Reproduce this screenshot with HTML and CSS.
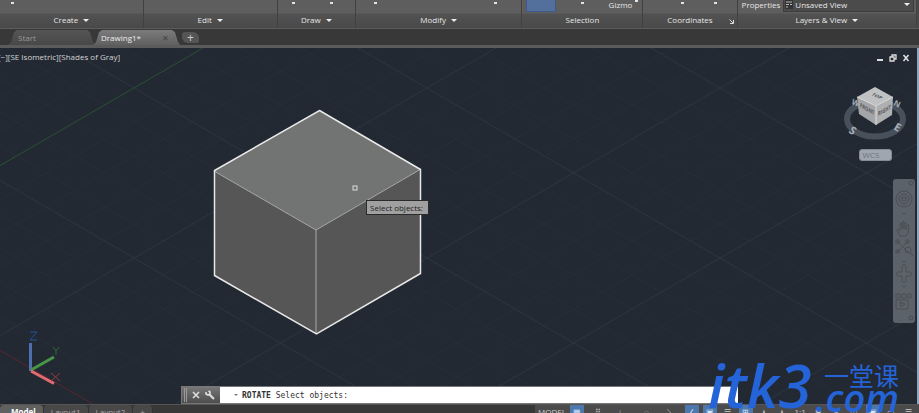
FILE: index.html
```
<!DOCTYPE html>
<html lang="en">

<head>
    <meta charset="utf-8">
    <title>Drawing1</title>
    <link rel="stylesheet" href="styles.css">
</head>

<body>
    <div class="app">
        <div class="ribbon">
            <div class="panel panel-create">
                <div class="panel-tools"><i class="dot"></i></div>
                <button class="panel-title">Create <i class="arrow"></i></button>
            </div>
            <div class="panel panel-edit">
                <div class="panel-tools"></div>
                <button class="panel-title">Edit <i class="arrow"></i></button>
            </div>
            <div class="panel panel-draw">
                <div class="panel-tools spread"><i class="dot"></i><i class="dot"></i></div>
                <button class="panel-title">Draw <i class="arrow"></i></button>
            </div>
            <div class="panel panel-modify">
                <div class="panel-tools spread"><i class="dot"></i><i class="dot"></i></div>
                <button class="panel-title">Modify <i class="arrow"></i></button>
            </div>
            <div class="panel panel-selection">
                <div class="panel-tools">
                    <button class="tool-active" aria-label="Culling"></button>
                    <i class="dot"></i>
                    <span class="gizmo">Gizmo <i class="dot"></i></span>
                </div>
                <div class="panel-title">Selection</div>
            </div>
            <div class="panel panel-coordinates">
                <div class="panel-tools spread"><i class="dot"></i><i class="dot"></i></div>
                <div class="panel-title">Coordinates
                    <svg class="launcher" width="5" height="5" viewBox="0 0 5 5"><path d="M0.5 0.5L4 4M4.5 1v3.5H1" /></svg>
                </div>
            </div>
            <div class="panel panel-layers">
                <div class="panel-tools">
                    <label for="view">Properties</label>
                    <div class="view-box">
                        <svg width="8" height="9" viewBox="0 0 8 9"><path class="view-icon-back" d="M0 0h8v9H0z" /><path class="view-icon" d="M1 2h6M1 4.500h3M5 4.500h2M1 7h2" /></svg>
                        <select id="view">
                            <option>Unsaved View</option>
                        </select>
                        <i class="arrow"></i>
                    </div>
                </div>
                <button class="panel-title">Layers &amp; View <i class="arrow"></i></button>
            </div>
        </div>

        <div class="file-tabs">
            <button class="file-tab">Start</button>
            <button class="file-tab active">Drawing1* <span class="tab-close">✕</span></button>
            <button class="file-tab-new" aria-label="New drawing">+</button>
        </div>

        <div class="viewport">
            <svg class="scene">
                <defs>
                    <pattern id="grid" x="134" y="40" width="293" height="170" patternUnits="userSpaceOnUse">
                        <path class="grid-minor" d="M0 34L58.600 0M0 68L117.200 0M0 102L175.800 0M0 136L234.400 0M58.600 170L293 34M117.200 170L293 68M175.800 170L293 102M234.400 170L293 136M0 34L234.400 170M0 68L175.800 170M0 102L117.200 170M0 136L58.600 170M58.600 0L293 136M117.200 0L293 102M175.800 0L293 68M234.400 0L293 34" />
                        <path class="grid-major" d="M0 0L293 170M0 170L293 0" />
                    </pattern>
                </defs>
                <rect width="100%" height="100%" fill="url(#grid)" />
                <path class="axis-y" d="M0 117.500L203 0" />
                <path class="axis-x" d="M0 302.500L93 356" />
                <path class="cube-top" d="M319 62L421 121L316 182L214 123z" />
                <path class="cube-side" d="M214 123L316 182V286L214 228zM421 121L316 182V286L421 225z" />
                <path class="cube-inner" d="M214 123L316 182L421 121M316 182V286" />
                <path class="cube-edge" d="M319.500 62.500L420.500 121.500V225.500L316.500 286L214.500 227.500V122.500z" />
                <rect class="pickbox" x="353" y="138" width="4" height="4" />
                <g class="ucs">
                    <path class="ucs-z" d="M30.500 323V295" />
                    <path class="ucs-y" d="M31 322L54 309" />
                    <path class="ucs-x" d="M31 323L54 335.500" />
                    <path class="ucs-z thin" d="M30 284h7l-7 8h7" />
                    <path class="ucs-y thin" d="M53 299l3 4l3-4M56 303v4" />
                    <path class="ucs-x thin" d="M51 325l9 8M60 325l-9 8" />
                </g>
            </svg>

            <div class="view-label">[−][SE Isometric][Shades of Gray]</div>
            <div class="window-buttons">
                <button aria-label="Minimize"><svg width="8" height="8" viewBox="0 0 8 8"><path d="M1 6h6" stroke-width="2" /></svg></button>
                <button aria-label="Restore"><svg width="8" height="8" viewBox="0 0 8 8"><path d="M1 3h4v4H1zM3 2.500V1h4v4H5.500" /></svg></button>
                <button aria-label="Close"><svg width="8" height="8" viewBox="0 0 8 8"><path d="M1.500 1l5 6M6.500 1l-5 6" stroke-width="1.600" /></svg></button>
            </div>

            <div class="view-cube">
                <svg width="66" height="58" viewBox="0 0 66 58">
                    <ellipse class="compass" cx="33" cy="34" rx="28" ry="17.500" />
                    <text class="vc-point" transform="translate(6 47) rotate(35)">S</text>
                    <text class="vc-point" transform="translate(51 44) rotate(30)">E</text>
                    <text class="vc-point small" transform="translate(9 19) rotate(20)">W</text>
                    <text class="vc-point small" transform="translate(51 20) rotate(25)">N</text>
                    <path class="vc-top" d="M33 2L51 12L34 21L15 12z" />
                    <path class="vc-left" d="M15 12L34 21V40L17 29z" />
                    <path class="vc-right" d="M34 21L51 12L50 30L34 40z" />
                    <path class="vc-edge" d="M15 12L34 21L51 12M34 21V40" />
                    <text class="vc-text" transform="matrix(.8 .35 -.6 .5 29 10)">TOP</text>
                    <text class="vc-text" transform="matrix(.7 .4 0 1 18 22)">FRONT</text>
                    <text class="vc-text" transform="matrix(.7 -.4 0 1 36 31)">RIGHT</text>
                </svg>
                <button class="wcs">WCS</button>
            </div>

            <div class="nav-bar">
                <svg width="22" height="144" viewBox="0 0 22 144">
                    <circle cx="18" cy="4" r="2" />
                    <circle cx="11" cy="20" r="8" />
                    <circle cx="11" cy="20" r="5" />
                    <path d="M9 18h4v4H9zM9 34l2 1l2-1" />
                    <path d="M7 57L4 51q1-2 3 1V45q1-2 2 0v5V43q1-2 2 0v7V44q1-2 2 0v7l1-5q2-1 2 1l-1 7l-2 3z" />
                    <path d="M4 62l11 11M15 62L4 73M3 61h3v3H3zM13 61h3v3h-3zM3 71h3v3H3z" />
                    <circle cx="15" cy="71" r="3" />
                    <path d="M17 73l3 4M9 82l2 1l2-1" />
                    <path d="M9 87l2-2l2 2v6h4l2 2l-2 2h-4v5l-2 2l-2-2v-5H5l-2-2l2-2h4z" />
                    <path d="M9 107l2 1l2-1M3 115h4v4H3zM9 115h4v4H9zM15 115h3v4h-3zM3 121h12v9H3z" />
                    <path d="M7 123l5 2l-4 3z" />
                    <circle cx="18" cy="139" r="2" />
                </svg>
            </div>

            <div class="tooltip">Select objects:</div>

            <div class="command-line">
                <div class="command-grip"></div>
                <button aria-label="Close"><svg width="8" height="8" viewBox="0 0 8 8"><path d="M1 1l6 6M7 1L1 7" stroke-width="1.600" /></svg></button>
                <button aria-label="Customize"><svg width="10" height="10" viewBox="0 0 10 10"><path d="M4.500 4.500L9 9" stroke-width="2.200" /><path d="M1 2v2l2 1l2-1V2L3.500 1" stroke-width="1.600" /></svg></button>
                <div class="command-box">
                    <i class="arrow small"></i>
                    <label for="command"><b>ROTATE</b> Select objects:</label>
                    <input id="command" type="text">
                </div>
            </div>
        </div>

        <div class="status-bar">
            <div class="layout-tabs">
                <button class="layout-tab active">Model</button>
                <button class="layout-tab">Layout1</button>
                <button class="layout-tab">Layout2</button>
                <button class="layout-tab">+</button>
            </div>
            <div class="status-tools">
                <button class="status-model">MODEL</button>
                <button class="on">▦</button>
                <button class="wide">⠿</button>
                <button class="wide">∟</button>
                <button class="wide">◌</button>
                <button class="wide">⟍</button>
                <button class="on">∠</button>
                <button class="on">▣</button>
                <button>☰</button>
                <button class="on">⊞</button>
                <button>⋏</button>
                <button>⋏</button>
                <button>1:1</button>
                <button>✱</button>
                <button>+</button>
                <button>◫</button>
                <button class="on">▣</button>
                <button>▭</button>
                <button>☰</button>
            </div>
        </div>

        <div class="watermark">
            <span class="mark-big">itk3</span>
            <span class="mark-right">
                <span class="mark-name" lang="zh">一堂课</span>
                <span class="mark-com">.com</span>
            </span>
        </div>
    </div>
</body>

</html>
```
FILE: styles.css
```
* {
    box-sizing: border-box;
}

body {
    margin: 0;
    background-color: #222932;
}

button, select, input {
    font: inherit;
    color: inherit;
    background: none;
    border: none;
    padding: 0;
    margin: 0;
}

.app {
    position: relative;
    display: flex;
    flex-direction: column;
    height: 100vh;
    overflow: hidden;
    font-family: "Open Sans", "Noto Sans", sans-serif;
    font-size: 8px;
    color: #e6e6e6;
}

.arrow {
    display: inline-block;
    border: 3px solid transparent;
    border-top: 3px solid #eee;
    border-bottom: none;
}

.arrow.small {
    border-width: 2px;
    border-top-color: #777;
}

.dot {
    width: 3px;
    height: 2px;
    background-color: #e4e4e4;
}

/* ribbon */
.ribbon {
    display: flex;
    height: 29px;
    flex-shrink: 0;
    padding-right: 2px;
    background-color: #4a4a4a;
    border-bottom: 1px solid #5c5c5c;
}

.panel {
    display: flex;
    flex-direction: column;
    flex-basis: 0;
    min-width: 0;
    border-right: 1px solid #414141;
    background: linear-gradient(#5e5e5e 13px, #525252 14px, #494949);
}

.panel-create { flex-grow: 144; }
.panel-edit { flex-grow: 134; }
.panel-draw { flex-grow: 78; }
.panel-modify { flex-grow: 167; }
.panel-selection { flex-grow: 121; }
.panel-coordinates { flex-grow: 94; }
.panel-layers { flex-grow: 180; }

.panel-tools {
    display: flex;
    align-items: flex-start;
    height: 13px;
    line-height: 10px;
}

.panel-tools > .dot {
    margin-top: 2px;
}

.panel-create .panel-tools {
    padding-left: 11px;
}

.panel-draw .panel-tools {
    padding: 0 22px 0 14px;
}

.panel-modify .panel-tools {
    padding: 0 24px 0 18px;
}

.panel-coordinates .panel-tools {
    padding: 0 20px 0 38px;
}

.spread {
    justify-content: space-between;
}

.panel-selection .panel-tools {
    justify-content: space-between;
    padding: 0 4px;
}

.tool-active {
    width: 30px;
    height: 12px;
    background-color: #536f9b;
    border: 1px solid #3f598a;
    border-top: none;
}

.gizmo {
    display: flex;
    gap: 3px;
}

.panel-title {
    position: relative;
    display: flex;
    align-items: center;
    justify-content: center;
    gap: 5px;
    height: 14px;
    line-height: 12px;
}

.launcher {
    position: absolute;
    right: 3px;
    top: 6px;
    fill: none;
    stroke: #ddd;
}

.panel-layers .panel-tools {
    gap: 3px;
    padding: 0 2px 0 4px;
}

.view-box {
    display: flex;
    flex: 1;
    align-items: center;
    gap: 2px;
    height: 12px;
    padding: 0 3px 2px 1px;
    background-color: #4b4b4b;
    border: 1px solid #3d3d3d;
    border-top: none;
}

.view-box select {
    flex: 1;
    min-width: 0;
    appearance: none;
}

.view-icon-back {
    fill: #333;
}

.view-icon {
    stroke: #bbb;
}

/* drawing tabs */
.file-tabs {
    display: flex;
    align-items: flex-end;
    height: 19px;
    flex-shrink: 0;
    padding-left: 8px;
    background-color: #383838;
    border-bottom: 3px solid #5b5b5b;
}

.file-tab {
    display: flex;
    align-items: center;
    justify-content: space-between;
    width: 87px;
    height: 15px;
    padding: 0 11px 0 10px;
    color: #999;
    background: linear-gradient(#555, #484848);
    clip-path: polygon(0 100%, 3px 80%, 6px 15%, 9px 0, 79px 0, 82px 15%, 85px 80%, 100% 100%);
}

.file-tab.active {
    margin-left: -2px;
    padding-left: 8px;
    color: #eee;
    background: linear-gradient(#7b7b7b, #606060);
}

.tab-close {
    color: #444;
}

.file-tab-new {
    width: 17px;
    height: 11px;
    margin: 0 0 2px 2px;
    line-height: 10px;
    font-size: 12px;
    color: #ccc;
    background-color: #555;
    border-radius: 3px 6px 2px 6px;
}

/* model space */
.viewport {
    position: relative;
    flex: 1;
    min-height: 0;
    overflow: hidden;
    background-color: #222932;
    border-right: 2px solid #8fa6c0;
}

.scene {
    display: block;
    width: 100%;
    height: 100%;
    fill: none;
}

.grid-minor {
    stroke: #242c36;
}

.grid-major {
    stroke: #2a3440;
}

.axis-y {
    stroke: #284c30;
}

.axis-x {
    stroke: #55232b;
}

.cube-top {
    fill: #717472;
}

.cube-side {
    fill: #565656;
}

.cube-inner {
    stroke: #aaa;
}

.cube-edge {
    stroke: #e8e8e8;
    stroke-width: 1.5;
}

.pickbox {
    stroke: #ddd;
}

.ucs path {
    stroke-width: 3;
}

.ucs .ucs-z { stroke: #4d6fae; }
.ucs .ucs-y { stroke: #489548; }
.ucs .ucs-x { stroke: #e06c72; }

.ucs .thin {
    stroke-width: 1;
}

.ucs .ucs-z.thin { stroke: #25529a; }
.ucs .ucs-y.thin { stroke: #2d6935; }
.ucs .ucs-x.thin { stroke: #933942; }

.view-label {
    position: absolute;
    top: 3px;
    left: -2px;
    line-height: 12px;
    color: #d4d4d4;
}

.window-buttons {
    position: absolute;
    top: 6px;
    right: 7px;
    display: flex;
    gap: 5px;
}

.window-buttons button, .command-line button {
    display: flex;
}

.window-buttons svg, .command-line svg {
    fill: none;
    stroke: #ddd;
    stroke-width: 1.3;
}

.view-cube {
    position: absolute;
    top: 37px;
    right: 9px;
    display: flex;
    flex-direction: column;
    align-items: center;
    gap: 6px;
}

.compass {
    fill: none;
    stroke: #47505b;
    stroke-width: 6;
}

.vc-top { fill: #bfc1c3; }
.vc-left { fill: #a3a5a8; }
.vc-right { fill: #adafb1; }

.vc-edge {
    fill: none;
    stroke: #ddd;
}

.vc-text {
    font-size: 6px;
    font-weight: bold;
    fill: #555;
}

.vc-point {
    font-size: 11px;
    font-weight: bold;
    fill: #a5abb2;
}

.vc-point.small {
    font-size: 8px;
}

.wcs {
    width: 33px;
    height: 12px;
    padding-left: 3px;
    line-height: 10px;
    text-align: left;
    color: #6d7480;
    background-color: #a0a6b0;
    border: 1px solid #858c97;
    border-radius: 3px;
}

.nav-bar {
    position: absolute;
    top: 131px;
    right: 2px;
    border-radius: 3px;
    background-color: #5c6269;
}

.nav-bar svg {
    display: block;
    fill: none;
    stroke: #484e55;
}

.tooltip {
    position: absolute;
    top: 152px;
    left: 366px;
    padding: 0 5px 0 3px;
    line-height: 13px;
    color: #222;
    background-color: #a0a0a0;
    border: 1px solid #2b2b2b;
}

.command-line {
    position: absolute;
    bottom: 0;
    left: 181px;
    right: 179px;
    display: flex;
    align-items: center;
    gap: 5px;
    height: 18px;
    padding-left: 2px;
    background: linear-gradient(#777, #4d4d4d);
    border: 1px solid #777;
    border-right: none;
}

.command-grip {
    width: 3px;
    height: 14px;
    border: 1px solid #999;
    border-width: 0 1px;
}

.command-box {
    display: flex;
    flex: 1;
    align-items: center;
    gap: 4px;
    height: 100%;
    padding-left: 14px;
    font-family: "DejaVu Sans Mono", "Liberation Mono", monospace;
    color: #333;
    background-color: #fff;
}

.command-box label {
    white-space: nowrap;
}

.command-box input {
    flex: 1;
    min-width: 0;
}

/* status bar */
.status-bar {
    display: flex;
    align-items: flex-start;
    justify-content: space-between;
    height: 9px;
    flex-shrink: 0;
    overflow: hidden;
    background-color: #383838;
    border-top: 1px solid #555;
}

.layout-tabs, .status-tools {
    display: flex;
    line-height: 12px;
}

.layout-tab {
    height: 14px;
    padding: 0 7px;
    color: #aaa;
    background-color: #484848;
    border-right: 1px solid #333;
    border-radius: 4px 4px 0 0;
}

.layout-tab.active {
    padding-left: 11px;
    font-weight: bold;
    color: #fff;
    background-color: #606060;
}

.status-tools {
    flex-basis: 384px;
    justify-content: space-between;
    padding: 0 3px;
    background-color: #4b4b4b;
}

.status-tools button {
    min-width: 14px;
    height: 14px;
    color: #ccc;
}

.status-tools .wide {
    min-width: 20px;
}

.status-tools .on {
    color: #dbe9ff;
    background-color: #4c78ad;
}

/* site mark over the drawing */
.watermark {
    position: absolute;
    right: 20px;
    bottom: 0;
    display: flex;
    align-items: flex-end;
    gap: 4px;
    padding-bottom: 5px;
    font-family: "Open Sans", "Noto Sans CJK SC", sans-serif;
    font-weight: 600;
    font-style: italic;
    color: #2563d8;
    pointer-events: none;
}

.mark-big {
    font-size: 60px;
    line-height: 46px;
}

.mark-right {
    display: flex;
    flex-direction: column;
    align-items: flex-end;
}

.mark-name {
    font-family: "Noto Sans CJK SC", sans-serif;
    font-size: 25px;
    font-weight: 400;
    font-style: normal;
    line-height: 24px;
}

.mark-com {
    font-size: 38px;
    line-height: 21px;
}
```
